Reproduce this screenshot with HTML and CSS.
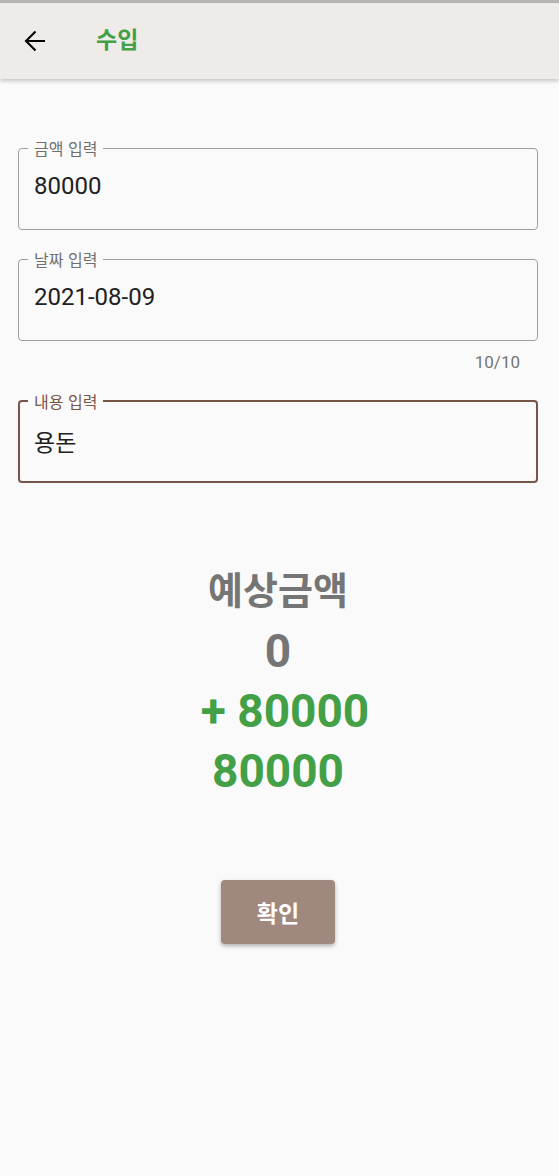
FILE: index.html
```html
<!DOCTYPE html>
<html lang="ko">
<head>
<meta charset="utf-8">
<link rel="stylesheet" href="styles.css">
</head>
<body>
<div class="statusline"></div>
<header class="appbar">
  <svg class="back" width="24" height="24" viewBox="0 0 24 24"><path d="M22 12H3M12.5 2.5L3 12l9.5 9.5" fill="none" stroke="#000" stroke-width="2.1"/></svg>
  <h1 class="title">수입</h1>
</header>
<main class="content">
  <fieldset class="field">
    <legend>금액 입력</legend>
    <div class="value">80000</div>
  </fieldset>
  <fieldset class="field second">
    <legend>날짜 입력</legend>
    <div class="value">2021-08-09</div>
  </fieldset>
  <div class="counter">10/10</div>
  <fieldset class="field focused">
    <legend>내용 입력</legend>
    <div class="value">용돈</div>
  </fieldset>
  <section class="summary">
    <div class="row label">예상금액</div>
    <div class="row num gray">0</div>
    <div class="row num green shifted">+ 80000</div>
    <div class="row num green">80000</div>
  </section>
  <div class="actions">
    <button class="ok">확인</button>
  </div>
</main>
</body>
</html>
```
FILE: styles.css
```css
html, body {
  margin: 0;
  padding: 0;
  background: #fafafa;
  font-family: Roboto, "Noto Sans CJK KR", sans-serif;
  width: 559px;
  height: 1176px;
  overflow: hidden;
}
.statusline {
  height: 3px;
  background: #b9b7b5;
}
.appbar {
  height: 76px;
  background: #efebe9;
  display: flex;
  align-items: center;
  box-shadow: 0 2px 4px rgba(0,0,0,0.22);
  position: relative;
}
.back {
  margin-left: 23px;
  width: 24px;
  height: 24px;
}
.title {
  margin: 0 0 0 49px;
  font-family: "Noto Sans CJK KR", sans-serif;
  font-weight: 700;
  font-size: 23px;
  color: #43a047;
  line-height: 1;
  position: relative;
  top: -3px;
}
.content {
  padding: 60px 21px 0 18px;
  display: flex;
  flex-direction: column;
}
.field {
  margin: 0;
  border: 1px solid #9e9e9e;
  border-radius: 4px;
  padding: 0 15px 29px 15px;
  min-width: 0;
}
.field legend {
  font-family: "Noto Sans CJK KR", sans-serif;
  font-size: 16px;
  line-height: 18px;
  color: #6f6f6f;
  padding: 0 6px;
  margin-left: -6px;
}
.field .value {
  margin-top: 15px;
  font-family: Roboto, "Noto Sans CJK KR", sans-serif;
  font-size: 24px;
  line-height: 28px;
  color: #212121;
}
.second {
  margin-top: 20px;
}
.counter {
  align-self: flex-end;
  margin-right: 18px;
  margin-top: 11px;
  font-size: 17px;
  line-height: 20px;
  color: #757575;
}
.focused {
  margin-top: 20px;
  border: 2px solid #795548;
  padding: 0 14px 26px 14px;
}
.focused legend {
  color: #795548;
}
.focused .value {
  font-family: "Noto Sans CJK KR", sans-serif;
  font-size: 23px;
  margin-top: 17px;
}
.summary {
  margin-top: 78px;
  display: flex;
  flex-direction: column;
  align-items: center;
}
.row {
  height: 60px;
  line-height: 60px;
  font-weight: 700;
  white-space: pre;
}
.row.label {
  font-family: "Noto Sans CJK KR", sans-serif;
  font-size: 38px;
  line-height: 54px;
  color: #757575;
}
.row.num {
  font-family: Roboto, sans-serif;
  font-size: 46px;
  line-height: 60px;
}
.row.shifted {
  padding-left: 14px;
}
.gray { color: #757575; }
.green { color: #43a047; }
.actions {
  margin-top: 79px;
  display: flex;
  justify-content: center;
}
.ok {
  width: 114px;
  height: 64px;
  border: none;
  border-radius: 4px;
  background: #a1887f;
  color: #fff;
  font-family: "Noto Sans CJK KR", sans-serif;
  font-weight: 700;
  font-size: 23px;
  box-shadow: 0 2px 4px rgba(0,0,0,0.3);
}
```
